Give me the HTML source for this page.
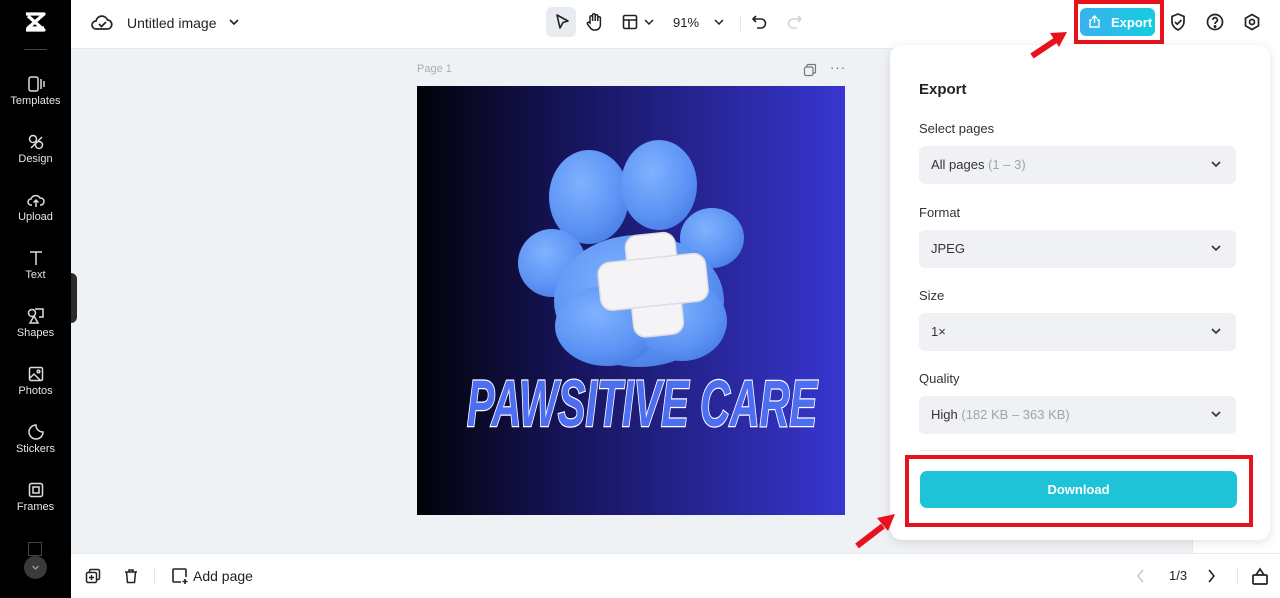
<!DOCTYPE html>
<html><head><meta charset="utf-8"><style>
*{margin:0;padding:0;box-sizing:border-box}
body{width:1280px;height:598px;overflow:hidden;font-family:"Liberation Sans",sans-serif;background:#eff2f5;position:relative;color:#1f2329}
.abs{position:absolute}
.side{left:0;top:0;width:71px;height:598px;background:#000;color:#e6e6e6}
.side .it{position:absolute;left:0;width:71px;text-align:center;font-size:11px}
.side svg{display:block;margin:0 auto 2px}
.top{left:71px;top:0;width:1209px;height:48px;background:#fff}
.bot{left:71px;top:553px;width:1209px;height:45px;background:#fff;border-top:1px solid #e8eaed}
.panel{left:890px;top:45px;width:380px;height:495px;background:#fff;border-radius:12px;box-shadow:0 2px 10px rgba(0,0,0,.12)}
.lbl{position:absolute;left:29px;font-size:13px;color:#333}
.sel{position:absolute;left:29px;width:317px;height:38px;background:#eff1f4;border-radius:6px;font-size:13px;color:#333;padding:11px 12px}
.sel span{color:#a0a5ab}
.sel svg{position:absolute;right:14px;top:13px}
.red{border:4px solid #e8121f}
</style></head><body>
<div class="abs side">
  <svg class="abs" style="left:24px;top:11px" width="22" height="22" viewBox="0 0 22 22"><path d="M2 3h18L4 17h16M2 19h18L4 5" stroke="#fff" stroke-width="3.2" fill="none" stroke-linejoin="round"/></svg>
  <div class="abs" style="left:24px;top:49px;width:23px;height:1px;background:#444"></div>
  <div class="it" style="top:75px"><svg width="18" height="18" viewBox="0 0 18 18" fill="none" stroke="#ddd" stroke-width="1.5"><rect x="2" y="2" width="9" height="14" rx="2"/><path d="M14 4v10M17 6v6"/></svg>Templates</div>
  <div class="it" style="top:133px"><svg width="18" height="18" viewBox="0 0 18 18" fill="none" stroke="#ddd" stroke-width="1.5"><circle cx="6" cy="6" r="3.5"/><circle cx="12" cy="12" r="3.5"/><path d="M4 15L15 4"/></svg>Design</div>
  <div class="it" style="top:191px"><svg width="18" height="18" viewBox="0 0 18 18" fill="none" stroke="#ddd" stroke-width="1.5"><path d="M5 14H4a3 3 0 010-6 5 5 0 019-1 3.5 3.5 0 011 7h-1M9 16V9M6.5 11.5L9 9l2.5 2.5"/></svg>Upload</div>
  <div class="it" style="top:249px"><svg width="18" height="18" viewBox="0 0 18 18" fill="none" stroke="#ddd" stroke-width="1.5"><path d="M3 3h12M9 3v13"/></svg>Text</div>
  <div class="it" style="top:307px"><svg width="18" height="18" viewBox="0 0 18 18" fill="none" stroke="#ddd" stroke-width="1.5"><path d="M8 2h8v8H12M3 16l4-7 4 7z"/><circle cx="5" cy="6" r="3.5"/></svg>Shapes</div>
  <div class="it" style="top:365px"><svg width="18" height="18" viewBox="0 0 18 18" fill="none" stroke="#ddd" stroke-width="1.5"><rect x="2.5" y="2.5" width="13" height="13" rx="1.5"/><path d="M3 13l4-4 6 6"/><circle cx="11.5" cy="6.5" r="1.3"/></svg>Photos</div>
  <div class="it" style="top:423px"><svg width="18" height="18" viewBox="0 0 18 18" fill="none" stroke="#ddd" stroke-width="1.5"><path d="M16 9A7 7 0 119 2c0 4 3 7 7 7z"/></svg>Stickers</div>
  <div class="it" style="top:481px"><svg width="18" height="18" viewBox="0 0 18 18" fill="none" stroke="#ddd" stroke-width="1.5"><rect x="2.5" y="2.5" width="13" height="13" rx="2"/><rect x="6" y="6" width="6" height="6"/></svg>Frames</div>
  <div class="abs" style="left:28px;top:542px;width:14px;height:14px;border:1.5px solid #444"></div>
  <div class="abs" style="left:24px;top:556px;width:23px;height:23px;border-radius:50%;background:#3a3a3a"><svg width="23" height="23" viewBox="0 0 23 23"><path d="M8.5 10l3 3 3-3" stroke="#999" stroke-width="1.3" fill="none"/></svg></div>
</div>
<div class="abs" style="left:71px;top:273px;width:6px;height:50px;background:#2b2b2b;border-radius:0 6px 6px 0"></div>

<div class="abs top">
  <svg class="abs" style="left:20px;top:13px" width="22" height="20" viewBox="0 0 22 20" fill="none" stroke="#222" stroke-width="1.7"><path d="M6 16H5a4 4 0 010-8 6 6 0 0111.5-1A4.5 4.5 0 0116 16z"/><path d="M8 11l2.5 2.5L15 9"/></svg>
  <div class="abs" style="left:56px;top:15px;font-size:14px;color:#222">Untitled image</div>
  <svg class="abs" style="left:157px;top:17px" width="12" height="10" viewBox="0 0 12 10"><path d="M2 3l4 4 4-4" stroke="#222" stroke-width="1.6" fill="none"/></svg>
  <div class="abs" style="left:475px;top:7px;width:30px;height:30px;background:#e8ebef;border-radius:6px"></div>
  <svg class="abs" style="left:482px;top:13px" width="18" height="18" viewBox="0 0 18 18" fill="none" stroke="#222" stroke-width="1.6" stroke-linejoin="round"><path d="M4 2l11 6-5 1.5L7 15z"/></svg>
  <svg class="abs" style="left:514px;top:12px" width="18" height="20" viewBox="0 0 18 20" fill="none" stroke="#222" stroke-width="1.5"><path d="M5 11V5a1.3 1.3 0 012.6 0v4V3a1.3 1.3 0 012.6 0v6V4a1.3 1.3 0 012.6 0v5V6a1.3 1.3 0 012.6 0v7a5 5 0 01-5 5h-1a5 5 0 01-4-2l-3-4a1.3 1.3 0 012-1.5z"/></svg>
  <svg class="abs" style="left:551px;top:14px" width="16" height="16" viewBox="0 0 16 16" fill="none" stroke="#222" stroke-width="1.6"><rect x="1.5" y="1.5" width="13" height="13" rx="1.5"/><path d="M1.5 6h13M7 6v8.5"/></svg>
  <svg class="abs" style="left:572px;top:18px" width="12" height="8" viewBox="0 0 12 8"><path d="M2 2l4 4 4-4" stroke="#222" stroke-width="1.5" fill="none"/></svg>
  <div class="abs" style="left:602px;top:15px;font-size:13px;color:#222">91%</div>
  <svg class="abs" style="left:642px;top:18px" width="12" height="8" viewBox="0 0 12 8"><path d="M2 2l4 4 4-4" stroke="#222" stroke-width="1.5" fill="none"/></svg>
  <div class="abs" style="left:669px;top:15px;width:1px;height:16px;background:#e3e5e8"></div>
  <svg class="abs" style="left:680px;top:13px" width="18" height="18" viewBox="0 0 18 18" fill="none" stroke="#222" stroke-width="1.6"><path d="M5 3L2 6l3 3M2 6h8a4.5 4.5 0 010 9H6"/></svg>
  <svg class="abs" style="left:714px;top:13px" width="18" height="18" viewBox="0 0 18 18" fill="none" stroke="#d0d4d9" stroke-width="1.6"><path d="M13 3l3 3-3 3M16 6H8a4.5 4.5 0 000 9h4"/></svg>
  <div class="abs red" style="left:1003px;top:0;width:90px;height:44px"></div>
  <div class="abs" style="left:1009px;top:8px;width:75px;height:28px;border-radius:6px;background:linear-gradient(90deg,#3ab0ee,#14cde0);color:#fff;font-weight:bold;font-size:13px;padding:7px 0 0 31px">Export</div>
  <svg class="abs" style="left:1017px;top:15px" width="13" height="13" viewBox="0 0 13 13" fill="none" stroke="#fff" stroke-width="1.4"><path d="M4 5H2v7h9V5H9M6.5 8V1M4 3.5L6.5 1 9 3.5"/></svg>
  <svg class="abs" style="left:1098px;top:12px" width="18" height="20" viewBox="0 0 18 20" fill="none" stroke="#222" stroke-width="1.7"><path d="M9 2l6 2.5v5c0 4-3 7-6 8.5-3-1.5-6-4.5-6-8.5v-5z"/><path d="M6 10l2.2 2.2L12.5 8"/></svg>
  <svg class="abs" style="left:1135px;top:13px" width="18" height="18" viewBox="0 0 18 18" fill="none" stroke="#222" stroke-width="1.7"><circle cx="9" cy="9" r="7.5"/><path d="M6.8 7a2.3 2.3 0 114 1.5c-1 .8-1.8 1-1.8 2.5"/><circle cx="9" cy="13.5" r=".6" fill="#222"/></svg>
  <svg class="abs" style="left:1172px;top:13px" width="18" height="18" viewBox="0 0 18 18" fill="none" stroke="#222" stroke-width="1.7"><path d="M9 1.5l6.5 3.75v7.5L9 16.5l-6.5-3.75v-7.5z"/><circle cx="9" cy="9" r="2.5"/></svg>
</div>
<div class="abs" style="left:71px;top:48px;width:1209px;height:1px;background:#e6e8eb"></div>

<div class="abs" style="left:417px;top:63px;font-size:11px;color:#a9aeb4">Page 1</div>
<svg class="abs" style="left:803px;top:63px" width="14" height="14" viewBox="0 0 14 14" fill="none" stroke="#777" stroke-width="1.2"><rect x="1.5" y="4" width="8.5" height="8.5" rx="1.5"/><path d="M4 4V2.5A1 1 0 015 1.5h6.5a1 1 0 011 1V9a1 1 0 01-1 1H10"/></svg>
<div class="abs" style="left:830px;top:60px;font-size:13px;color:#666;letter-spacing:1px">···</div>

<svg class="abs" style="left:417px;top:86px" width="428" height="429" viewBox="0 0 428 429">
 <defs><linearGradient id="bg" x1="0" x2="1"><stop offset="0" stop-color="#020208"/><stop offset=".35" stop-color="#16145a"/><stop offset="1" stop-color="#3836d0"/></linearGradient>
 <radialGradient id="bl" cx=".4" cy=".35" r=".7"><stop offset="0" stop-color="#80b2ff"/><stop offset=".7" stop-color="#5c93f4"/><stop offset="1" stop-color="#4a7ee6"/></radialGradient></defs>
 <rect width="428" height="429" fill="url(#bg)"/>
 <g fill="url(#bl)">
  <ellipse cx="172" cy="111" rx="40" ry="47"/>
  <ellipse cx="242" cy="99" rx="38" ry="45"/>
  <ellipse cx="295" cy="152" rx="32" ry="30"/>
  <ellipse cx="135" cy="177" rx="34" ry="34"/>
  <ellipse cx="222" cy="215" rx="85" ry="66"/>
  <ellipse cx="190" cy="240" rx="52" ry="40"/>
  <ellipse cx="265" cy="235" rx="45" ry="40"/>
 </g>
 <g fill="#f4f4f6" stroke="#dcdce2" stroke-width="1.5" transform="rotate(-6 235 195)">
  <rect x="212" y="148" width="50" height="102" rx="12"/>
  <rect x="182" y="172" width="108" height="48" rx="12"/>
  <rect x="213" y="173" width="48" height="46" fill="#f4f4f6" stroke="none"/>
 </g>
 <text x="225" y="340" text-anchor="middle" font-family="Liberation Sans Narrow, Liberation Sans, sans-serif" font-weight="bold" font-style="italic" font-size="66" fill="#4d6ef0" stroke="#fff" stroke-width="2.5" paint-order="stroke" textLength="350" lengthAdjust="spacingAndGlyphs">PAWSITIVE CARE</text>
</svg>

<div class="abs" style="left:1192px;top:48px;width:88px;height:505px;background:#fff;border-left:1px solid #e6e8eb"></div>
<div class="abs panel">
  <div class="abs" style="left:29px;top:36px;font-size:15px;font-weight:bold;color:#1f2329">Export</div>
  <div class="lbl" style="top:76px">Select pages</div>
  <div class="sel" style="top:101px">All pages <span>(1 – 3)</span><svg width="12" height="10" viewBox="0 0 12 10"><path d="M2 3l4 4 4-4" stroke="#333" stroke-width="1.6" fill="none"/></svg></div>
  <div class="lbl" style="top:160px">Format</div>
  <div class="sel" style="top:185px">JPEG<svg width="12" height="10" viewBox="0 0 12 10"><path d="M2 3l4 4 4-4" stroke="#333" stroke-width="1.6" fill="none"/></svg></div>
  <div class="lbl" style="top:243px">Size</div>
  <div class="sel" style="top:268px">1×<svg width="12" height="10" viewBox="0 0 12 10"><path d="M2 3l4 4 4-4" stroke="#333" stroke-width="1.6" fill="none"/></svg></div>
  <div class="lbl" style="top:326px">Quality</div>
  <div class="sel" style="top:351px">High <span>(182 KB – 363 KB)</span><svg width="12" height="10" viewBox="0 0 12 10"><path d="M2 3l4 4 4-4" stroke="#333" stroke-width="1.6" fill="none"/></svg></div>
  <div class="abs" style="left:29px;top:405px;width:317px;height:1px;background:#eceef1"></div>
  <div class="abs red" style="left:15px;top:410px;width:348px;height:72px"></div>
  <div class="abs" style="left:30px;top:426px;width:317px;height:37px;border-radius:7px;background:#1fc3d8;color:#fff;font-weight:bold;font-size:13px;text-align:center;line-height:37px">Download</div>
</div>

<svg class="abs" style="left:1028px;top:30px" width="42" height="30" viewBox="0 0 42 30"><path d="M4 26L28 10" stroke="#e8121f" stroke-width="6"/><path d="M22 3l17 -1-8 15z" fill="#e8121f"/></svg>
<svg class="abs" style="left:853px;top:512px" width="46" height="38" viewBox="0 0 46 38"><path d="M4 34L30 14" stroke="#e8121f" stroke-width="6"/><path d="M24 6l18-4-7 17z" fill="#e8121f"/></svg>

<div class="abs bot">
  <svg class="abs" style="left:14px;top:14px" width="16" height="16" viewBox="0 0 16 16" fill="none" stroke="#222" stroke-width="1.5"><rect x="1.5" y="4.5" width="10" height="10" rx="1.5"/><path d="M4.5 4.5V3a1.5 1.5 0 011.5-1.5h7A1.5 1.5 0 0114.5 3v7a1.5 1.5 0 01-1.5 1.5h-1.5M6.5 7v5M4 9.5h5"/></svg>
  <svg class="abs" style="left:52px;top:14px" width="16" height="16" viewBox="0 0 16 16" fill="none" stroke="#222" stroke-width="1.5"><path d="M2 4h12M6 4V2h4v2M3.5 4l1 10.5h7l1-10.5"/></svg>
  <div class="abs" style="left:83px;top:14px;width:1px;height:16px;background:#e3e5e8"></div>
  <svg class="abs" style="left:100px;top:13px" width="18" height="18" viewBox="0 0 18 18" fill="none" stroke="#222" stroke-width="1.6"><path d="M10 15H3a1 1 0 01-1-1V3a1 1 0 011-1h11a1 1 0 011 1v7M14 12v5M11.5 14.5h5"/></svg>
  <div class="abs" style="left:122px;top:14px;font-size:14px;color:#222">Add page</div>
  <svg class="abs" style="left:1064px;top:14px" width="12" height="16" viewBox="0 0 12 16"><path d="M8 2L3 8l5 6" stroke="#c6cace" stroke-width="1.5" fill="none"/></svg>
  <div class="abs" style="left:1098px;top:14px;font-size:13px;color:#222">1/3</div>
  <svg class="abs" style="left:1134px;top:14px" width="12" height="16" viewBox="0 0 12 16"><path d="M4 2l5 6-5 6" stroke="#222" stroke-width="1.6" fill="none"/></svg>
  <div class="abs" style="left:1166px;top:13px;width:1px;height:18px;background:#e3e5e8"></div>
  <svg class="abs" style="left:1180px;top:12px" width="18" height="20" viewBox="0 0 18 20" fill="none" stroke="#222" stroke-width="1.7"><rect x="2" y="9" width="14" height="9" rx="1"/><path d="M5 9l4-6 4 6"/></svg>
</div>
</body></html>
